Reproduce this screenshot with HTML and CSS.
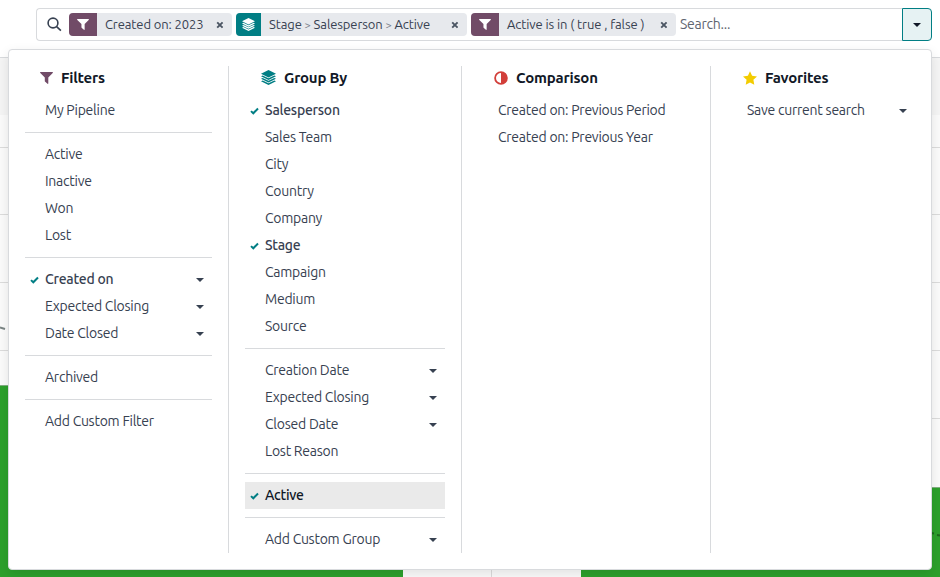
FILE: index.html
```html
<!DOCTYPE html>
<html lang="en">
<head>
<meta charset="utf-8">
<title>Pipeline search</title>
<link rel="stylesheet" href="styles.css">
</head>
<body>
<svg class="defs" aria-hidden="true">
  <symbol id="funnel" viewBox="0 0 13 12"><path d="M.3 0h12.4q.4.5 0 1L8.3 5.400V11.500q-.2.6-.8.300L5.200 9.800q-.4-.3-.4-.7V5.400L.3 1Q-.1.500.3 0z"/></symbol>
  <symbol id="layers" viewBox="0 0 15 15"><path d="M7.500 0L15 3.700 7.500 7.500 0 3.700z"/><path d="M0 6.300l1.700-.8 5.800 2.800 5.800-2.800 1.700.8-7.500 3.700z"/><path d="M0 8.800l1.700-.8 5.800 2.800L13.300 8l1.700.8-7.500 3.700z"/><path d="M0 11.300l1.700-.8 5.800 2.800 5.800-2.800 1.700.8L7.500 15z"/></symbol>
  <symbol id="check" viewBox="0 0 9 8"><path d="M1 4.100l2.300 2.200L8 1.500" fill="none" stroke="currentColor" stroke-width="2"/></symbol>
  <symbol id="caret" viewBox="0 0 8 4"><path d="M0 0h8L4 4z"/></symbol>
  <symbol id="cross" viewBox="0 0 8 8"><path d="M1.200 1.300l5.400 5.400M6.600 1.300L1.200 6.700" fill="none" stroke="currentColor" stroke-width="1.900"/></symbol>
</svg>

<svg class="chart" width="940" height="577" viewBox="0 0 940 577" shape-rendering="crispEdges">
  <path fill="#d8dadd" d="M0 57h940v1H0z"/>
  <path fill="#f5f5f5" d="M0 58h940v57H0z"/>
  <path fill="#fbfbfb" d="M0 115h940v462H0z"/>
  <path fill="#dcdcdc" d="M0 147h940v1H0zM0 214h940v1H0zM0 282h940v1H0zM0 350h940v1H0zM0 418h940v1H0zM491 480h1v97h-1z"/>
  <path fill="#2ca02c" d="M0 385h403v192H0zM581 487h359v90H581z"/>
  <path fill="#81af81" d="M0 385h403v1H0zM581 487h359v1H581z"/>
  <path fill="none" stroke="#7b8585" stroke-width="2" shape-rendering="auto" d="M0 327.500l5 1.500"/>
  <path fill="none" stroke="#1c681c" stroke-width="2" shape-rendering="auto" d="M931 533l3 .5M937 535l3 .5"/>
</svg>

<div class="search">
  <div class="box">
    <svg class="lens" viewBox="0 0 15 15"><circle cx="6" cy="6" r="4.900"/><path d="M9.600 9.600l4.300 4"/></svg>
    <div class="facet f1"><span class="tag plum"><svg class="funnel"><use href="#funnel"/></svg></span><span class="val">Created on: 2023</span><svg class="cross"><use href="#cross"/></svg></div>
    <div class="facet f2"><span class="tag teal"><svg class="layers"><use href="#layers"/></svg></span><span class="val">Stage <i>&gt;</i> Salesperson <i>&gt;</i> Active</span><svg class="cross"><use href="#cross"/></svg></div>
    <div class="facet f3"><span class="tag plum"><svg class="funnel"><use href="#funnel"/></svg></span><span class="val">Active is in ( true , false )</span><svg class="cross"><use href="#cross"/></svg></div>
    <span class="placeholder">Search...</span>
  </div>
  <div class="toggle"><svg class="caret"><use href="#caret"/></svg></div>
</div>

<div class="menu">
  <section class="col c1">
    <h2><svg class="funnel"><use href="#funnel"/></svg>Filters</h2>
    <div class="item"><span>My Pipeline</span></div>
    <hr>
    <div class="item"><span>Active</span></div>
    <div class="item"><span>Inactive</span></div>
    <div class="item"><span>Won</span></div>
    <div class="item"><span>Lost</span></div>
    <hr>
    <div class="item on"><svg class="check"><use href="#check"/></svg><span>Created on</span><svg class="caret"><use href="#caret"/></svg></div>
    <div class="item"><span>Expected Closing</span><svg class="caret"><use href="#caret"/></svg></div>
    <div class="item"><span>Date Closed</span><svg class="caret"><use href="#caret"/></svg></div>
    <hr>
    <div class="item"><span>Archived</span></div>
    <hr>
    <div class="item"><span>Add Custom Filter</span></div>
  </section>
  <section class="col c2">
    <h2><svg class="layers"><use href="#layers"/></svg>Group By</h2>
    <div class="item on"><svg class="check"><use href="#check"/></svg><span>Salesperson</span></div>
    <div class="item"><span>Sales Team</span></div>
    <div class="item"><span>City</span></div>
    <div class="item"><span>Country</span></div>
    <div class="item"><span>Company</span></div>
    <div class="item on"><svg class="check"><use href="#check"/></svg><span>Stage</span></div>
    <div class="item"><span>Campaign</span></div>
    <div class="item"><span>Medium</span></div>
    <div class="item"><span>Source</span></div>
    <hr>
    <div class="item"><span>Creation Date</span><svg class="caret"><use href="#caret"/></svg></div>
    <div class="item"><span>Expected Closing</span><svg class="caret"><use href="#caret"/></svg></div>
    <div class="item"><span>Closed Date</span><svg class="caret"><use href="#caret"/></svg></div>
    <div class="item"><span>Lost Reason</span></div>
    <hr>
    <div class="item on focus"><svg class="check"><use href="#check"/></svg><span>Active</span></div>
    <hr>
    <div class="item"><span>Add Custom Group</span><svg class="caret"><use href="#caret"/></svg></div>
  </section>
  <section class="col c3">
    <h2><svg class="half" viewBox="0 0 14 14"><circle cx="7" cy="7" r="5.900" fill="none" stroke="currentColor" stroke-width="1.800"/><path d="M7 1a6 6 0 0 1 0 12z"/></svg>Comparison</h2>
    <div class="item"><span>Created on: Previous Period</span></div>
    <div class="item"><span>Created on: Previous Year</span></div>
  </section>
  <section class="col c4">
    <h2><svg class="star" viewBox="0 0 14 14"><path d="M7 .2l2.100 4.500 4.900.7-3.600 3.400.9 4.900L7 11.400l-4.300 2.300.9-4.900L0 5.400l4.900-.7z"/></svg>Favorites</h2>
    <div class="item"><span>Save current search</span><svg class="caret"><use href="#caret"/></svg></div>
  </section>
</div>
</body>
</html>
```
FILE: styles.css
```css
* { box-sizing: border-box; }
body {
  margin: 0;
  width: 940px;
  height: 577px;
  padding: 8px 8px 0;
  overflow: hidden;
  background: #fff;
  color: #374151;
  font: 14px/27px Ubuntu, "Noto Sans", sans-serif;
  letter-spacing: -0.25px;
}
svg { fill: currentColor; flex: none; display: block; }
.defs { position: absolute; width: 0; height: 0; }
.chart { position: absolute; left: 0; top: 0; z-index: -1; }

.search { display: flex; height: 33px; margin-left: 28px; }
.box {
  flex: 1;
  display: flex;
  align-items: center;
  gap: 4px;
  padding-left: 10px;
  border: 1px solid #d8dadd;
  border-right: 0;
  border-radius: 4px 0 0 4px;
  background: #fff;
}
.lens { width: 15px; height: 15px; margin-right: 3px; fill: none; stroke: #374151; stroke-width: 1.6; }
.facet {
  display: flex;
  align-items: center;
  height: 23px;
  border-radius: 4px;
  overflow: hidden;
  background: #e7e9ed;
  font-size: 13px;
  line-height: 23px;
  letter-spacing: -0.1px;
  white-space: nowrap;
  padding-right: 8px;
}
.f1 { width: 163px; }
.f2 { width: 231px; }
.f3 { width: 205px; }
.val { flex: 1; padding-left: 8px; }
.val i { font-style: normal; font-size: 11px; color: #7c828c; }
.tag { display: flex; align-items: center; justify-content: center; width: 28px; height: 23px; color: #fff; }
.f2 .tag { width: 25px; }
.plum { background: #714b67; }
.teal { background: #017e84; }
.tag .layers { width: 13px; height: 13px; }
.funnel { width: 13px; height: 12px; }
.tag .funnel { width: 12px; height: 11px; }
.layers { width: 15px; height: 15px; }
.cross { width: 8px; height: 8px; color: #4b5563; margin-top: 1px; }
.placeholder { color: #5f6570; }
.toggle {
  display: flex;
  align-items: center;
  justify-content: center;
  width: 30px;
  border: 1px solid #017e84;
  border-radius: 0 4px 4px 0;
  background: #e6f2f3;
  color: #111827;
}

.menu {
  display: flex;
  width: 924px;
  height: 521px;
  margin-top: 8px;
  padding: 16px 0;
  border: 1px solid #d8dadd;
  border-radius: 4px;
  background: #fff;
  box-shadow: 0 4px 12px rgba(0, 0, 0, 0.1);
}
.col { padding: 0 16px; border-right: 1px solid #d8dadd; }
.c1 { width: 220px; }
.c2 { width: 233px; }
.c3 { width: 249px; }
.c4 { flex: 1; border: 0; }
h2 {
  display: flex;
  align-items: center;
  gap: 8px;
  height: 23px;
  margin: 0 0 8px;
  padding-left: 16px;
  color: #111827;
  font-size: 15px;
  font-weight: 600;
  letter-spacing: -0.2px;
}
.c1 h2 { color: #111827; padding-left: 15px; }
h2 .funnel { color: #714b67; }
h2 .layers { color: #017e84; }
h2 .half { width: 14px; height: 14px; color: #d23f3a; }
h2 .star { width: 14px; height: 14px; color: #f3cc00; }
.item {
  display: flex;
  align-items: center;
  justify-content: space-between;
  position: relative;
  height: 27px;
  padding: 0 8px 0 20px;
  white-space: nowrap;
}
.check { position: absolute; left: 5px; top: 10px; width: 9px; height: 8px; color: #017e84; }
.caret { width: 8px; height: 4px; }
.on { font-weight: 500; }
.focus { background: #eaeaea; color: #111827; }
hr { height: 1px; margin: 8px 0; border: 0; background: #d8dadd; }
```
